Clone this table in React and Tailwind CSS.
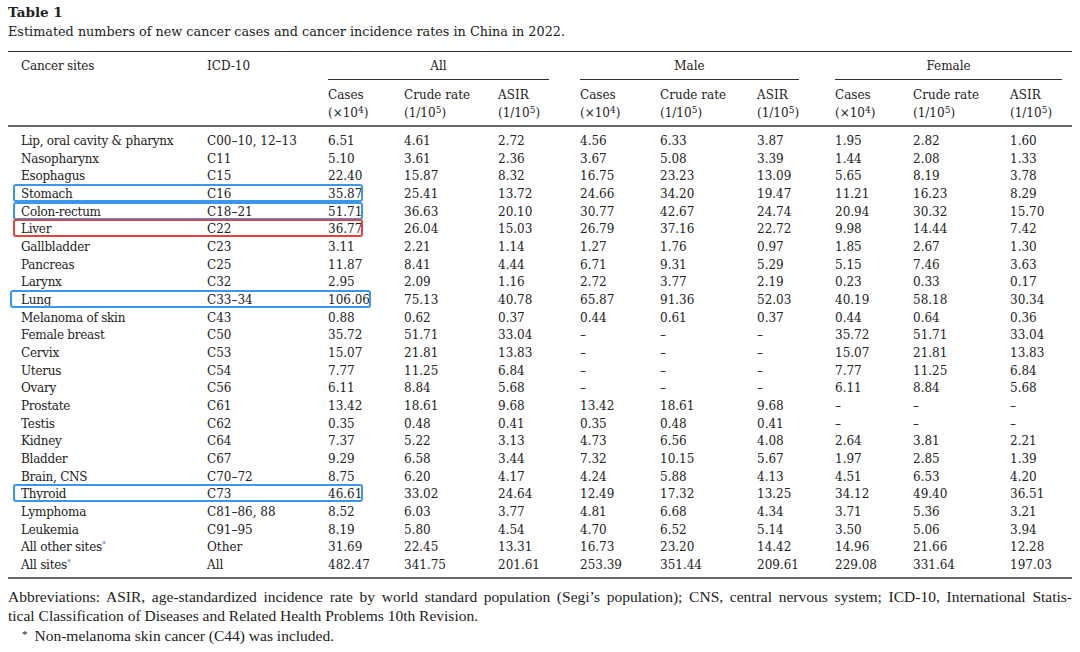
const rows = [
  ["Lip, oral cavity & pharynx", "C00–10, 12–13", "6.51 4.61 2.72 4.56 6.33 3.87 1.95 2.82 1.60"],
  ["Nasopharynx", "C11", "5.10 3.61 2.36 3.67 5.08 3.39 1.44 2.08 1.33"],
  ["Esophagus", "C15", "22.40 15.87 8.32 16.75 23.23 13.09 5.65 8.19 3.78"],
  ["Stomach", "C16", "35.87 25.41 13.72 24.66 34.20 19.47 11.21 16.23 8.29", "blue"],
  ["Colon-rectum", "C18–21", "51.71 36.63 20.10 30.77 42.67 24.74 20.94 30.32 15.70", "blue"],
  ["Liver", "C22", "36.77 26.04 15.03 26.79 37.16 22.72 9.98 14.44 7.42", "red"],
  ["Gallbladder", "C23", "3.11 2.21 1.14 1.27 1.76 0.97 1.85 2.67 1.30"],
  ["Pancreas", "C25", "11.87 8.41 4.44 6.71 9.31 5.29 5.15 7.46 3.63"],
  ["Larynx", "C32", "2.95 2.09 1.16 2.72 3.77 2.19 0.23 0.33 0.17"],
  ["Lung", "C33–34", "106.06 75.13 40.78 65.87 91.36 52.03 40.19 58.18 30.34", "wide"],
  ["Melanoma of skin", "C43", "0.88 0.62 0.37 0.44 0.61 0.37 0.44 0.64 0.36"],
  ["Female breast", "C50", "35.72 51.71 33.04 – – – 35.72 51.71 33.04"],
  ["Cervix", "C53", "15.07 21.81 13.83 – – – 15.07 21.81 13.83"],
  ["Uterus", "C54", "7.77 11.25 6.84 – – – 7.77 11.25 6.84"],
  ["Ovary", "C56", "6.11 8.84 5.68 – – – 6.11 8.84 5.68"],
  ["Prostate", "C61", "13.42 18.61 9.68 13.42 18.61 9.68 – – –"],
  ["Testis", "C62", "0.35 0.48 0.41 0.35 0.48 0.41 – – –"],
  ["Kidney", "C64", "7.37 5.22 3.13 4.73 6.56 4.08 2.64 3.81 2.21"],
  ["Bladder", "C67", "9.29 6.58 3.44 7.32 10.15 5.67 1.97 2.85 1.39"],
  ["Brain, CNS", "C70–72", "8.75 6.20 4.17 4.24 5.88 4.13 4.51 6.53 4.20"],
  ["Thyroid", "C73", "46.61 33.02 24.64 12.49 17.32 13.25 34.12 49.40 36.51", "blue"],
  ["Lymphoma", "C81–86, 88", "8.52 6.03 3.77 4.81 6.68 4.34 3.71 5.36 3.21"],
  ["Leukemia", "C91–95", "8.19 5.80 4.54 4.70 6.52 5.14 3.50 5.06 3.94"],
  ["All other sites", "Other", "31.69 22.45 13.31 16.73 23.20 14.42 14.96 21.66 12.28", null, true],
  ["All sites", "All", "482.47 341.75 201.61 253.39 351.44 209.61 229.08 331.64 197.03", null, true],
]

const cols = "grid grid-cols-[199px_121px_76px_94px_82px_80px_97px_78px_78px_97px_62px]"

function SubHead() {
  const cells = []
  for (let i = 0; i < 3; i++) {
    cells.push(
      <div key={"c" + i}>Cases<br />(×10<sup>4</sup>)</div>,
      <div key={"r" + i}>Crude rate<br />(1/10<sup>5</sup>)</div>,
      <div key={"a" + i}>ASIR<br />(1/10<sup>5</sup>)</div>
    )
  }
  return cells
}

export default function App() {
  return (
    <div className="w-[1080px] h-[652px] bg-white px-[8px] pt-[4px] text-[#222] font-['DejaVu_Serif',serif] overflow-hidden">
      <div className="text-[13.5px] font-bold leading-[17px]">Table 1</div>
      <div className="text-[12.8px] leading-[20px] mt-[1px]">Estimated numbers of new cancer cases and cancer incidence rates in China in 2022.</div>

      <div className="mt-[9px] border-t border-[#333] text-[12px]">
        <div className={cols + " leading-[18px] pt-[5px]"}>
          <div className="pl-[13px] tracking-[-0.2px]">Cancer sites</div>
          <div>ICD-10</div>
          <div className="col-span-3 mr-[31px] text-center pb-[4px] border-b border-[#333]">All</div>
          <div className="col-span-3 mr-[36px] text-center pb-[4px] border-b border-[#333]">Male</div>
          <div className="col-span-3 mr-[10px] text-center pb-[4px] border-b border-[#333]">Female</div>
        </div>
        <div className={cols + " leading-[18px] pt-[6px] pb-[3px] border-b-2 border-[#666]"}>
          <div className="col-span-2" />
          <SubHead />
        </div>

        <div className="pt-[6px] pb-[2px] border-b-2 border-[#666]">
          {rows.map(([site, icd, nums, mark, star]) => (
            <div key={site} className={cols + " relative leading-[17.67px]"}>
              {mark && (
                <div
                  className={
                    "absolute top-[-2px] h-[18px] border-2 rounded-[3px] " +
                    (mark === "red" ? "border-[#e8403a] " : "border-[#3b97ee] ") +
                    (mark === "wide" ? "left-[2px] w-[361px]" : "left-[5px] w-[350px]")
                  }
                />
              )}
              <div className="pl-[13px] tracking-[-0.25px]">
                {site}
                {star && <sup className="text-[#3a6fb0] text-[8px]">*</sup>}
              </div>
              <div>{icd}</div>
              {nums.split(" ").map((n, i) => (
                <div key={i}>{n}</div>
              ))}
            </div>
          ))}
        </div>
      </div>

      <div className="pt-[8px] text-[15.5px] leading-[19.5px] font-['Liberation_Serif',serif]">
        <div className="text-justify [text-align-last:justify]">
          Abbreviations: ASIR, age-standardized incidence rate by world standard population (Segi’s population); CNS, central nervous system; ICD-10, International Statis-
        </div>
        <div>tical Classification of Diseases and Related Health Problems 10th Revision.</div>
        <div className="pl-[14px]">
          <span className="relative top-[-3px] text-[11px] mr-[7px]">*</span>
          Non-melanoma skin cancer (C44) was included.
        </div>
      </div>
    </div>
  )
}
